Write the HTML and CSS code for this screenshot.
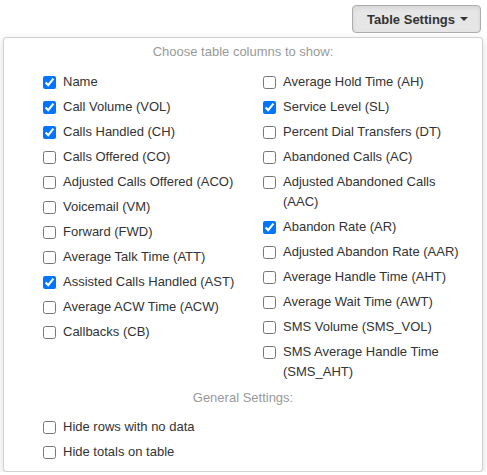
FILE: index.html
```html
<!DOCTYPE html>
<html>
<head>
<meta charset="utf-8">
<link rel="stylesheet" href="styles.css">
</head>
<body>
<div class="topbar">
  <button class="btn-settings">Table Settings <span class="caret"></span></button>
</div>
<div class="dropdown">
  <div class="heading">Choose table columns to show:</div>
  <div class="columns">
    <div class="col">
      <label class="item"><input type="checkbox" checked><span>Name</span></label>
      <label class="item"><input type="checkbox" checked><span>Call Volume (VOL)</span></label>
      <label class="item"><input type="checkbox" checked><span>Calls Handled (CH)</span></label>
      <label class="item"><input type="checkbox"><span>Calls Offered (CO)</span></label>
      <label class="item"><input type="checkbox"><span>Adjusted Calls Offered (ACO)</span></label>
      <label class="item"><input type="checkbox"><span>Voicemail (VM)</span></label>
      <label class="item"><input type="checkbox"><span>Forward (FWD)</span></label>
      <label class="item"><input type="checkbox"><span>Average Talk Time (ATT)</span></label>
      <label class="item"><input type="checkbox" checked><span>Assisted Calls Handled (AST)</span></label>
      <label class="item"><input type="checkbox"><span>Average ACW Time (ACW)</span></label>
      <label class="item"><input type="checkbox"><span>Callbacks (CB)</span></label>
    </div>
    <div class="col">
      <label class="item"><input type="checkbox"><span>Average Hold Time (AH)</span></label>
      <label class="item"><input type="checkbox" checked><span>Service Level (SL)</span></label>
      <label class="item"><input type="checkbox"><span>Percent Dial Transfers (DT)</span></label>
      <label class="item"><input type="checkbox"><span>Abandoned Calls (AC)</span></label>
      <label class="item"><input type="checkbox"><span>Adjusted Abandoned Calls (AAC)</span></label>
      <label class="item"><input type="checkbox" checked><span>Abandon Rate (AR)</span></label>
      <label class="item"><input type="checkbox"><span>Adjusted Abandon Rate (AAR)</span></label>
      <label class="item"><input type="checkbox"><span>Average Handle Time (AHT)</span></label>
      <label class="item"><input type="checkbox"><span>Average Wait Time (AWT)</span></label>
      <label class="item"><input type="checkbox"><span>SMS Volume (SMS_VOL)</span></label>
      <label class="item"><input type="checkbox"><span>SMS Average Handle Time (SMS_AHT)</span></label>
    </div>
  </div>
  <div class="heading general">General Settings:</div>
  <div class="settings">
    <label class="item"><input type="checkbox"><span>Hide rows with no data</span></label>
    <label class="item"><input type="checkbox"><span>Hide totals on table</span></label>
  </div>
</div>
</body>
</html>
```

FILE: styles.css
```css
html, body {
  margin: 0;
  padding: 0;
  background: #fff;
  font-family: "Liberation Sans", Arial, sans-serif;
  font-size: 13px;
  color: #333;
}

.topbar {
  display: flex;
  justify-content: flex-end;
  padding: 5px 6px 0 0;
  height: 32px;
  box-sizing: border-box;
}

.btn-settings {
  display: flex;
  align-items: center;
  gap: 5px;
  height: 28px;
  padding: 0 12px 0 14px;
  background: #e6e6e6;
  border: 1px solid #adadad;
  border-radius: 4px;
  font-family: "Liberation Sans", Arial, sans-serif;
  font-size: 13px;
  font-weight: bold;
  color: #333;
  box-shadow: inset 0 2px 4px rgba(0,0,0,0.08);
}

.caret {
  width: 0;
  height: 0;
  border-left: 4px solid transparent;
  border-right: 4px solid transparent;
  border-top: 4px solid #333;
}

.dropdown {
  margin: 5px 0 0 3px;
  width: 480px;
  height: 435px;
  box-sizing: border-box;
  border: 1px solid rgba(0,0,0,0.18);
  border-radius: 4px;
  box-shadow: 0 3px 8px rgba(0,0,0,0.15);
  background: #fff;
  padding: 4px 0 0 39px;
}

.heading {
  text-align: center;
  color: #999;
  line-height: 20px;
  margin-left: -39px;
}

.columns {
  display: grid;
  grid-template-columns: 220px 220px;
  margin-top: 10px;
}

.col, .settings {
  display: flex;
  flex-direction: column;
  gap: 5px;
}

.item {
  display: flex;
  align-items: flex-start;
  line-height: 20px;
}

.item input {
  width: 13px;
  height: 13px;
  margin: 4px 7px 0 0;
  flex: none;
}

.item span {
  max-width: 180px;
}

.general {
  margin-top: 6px;
}

.settings {
  margin-top: 9px;
}
```
